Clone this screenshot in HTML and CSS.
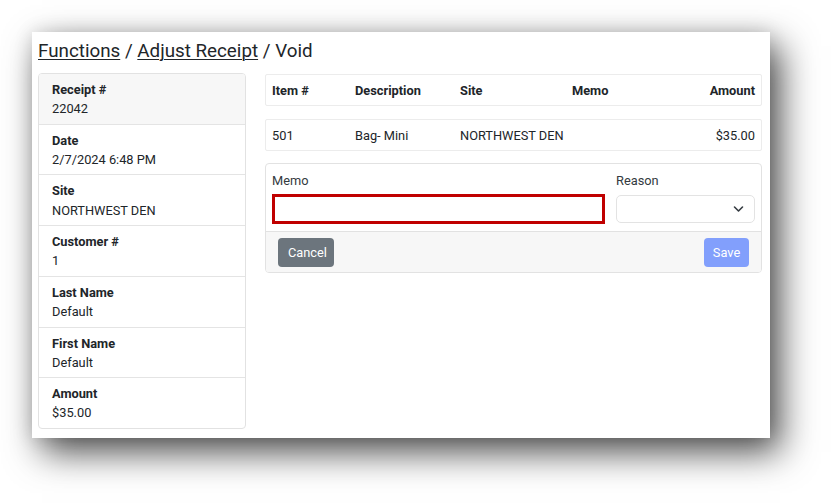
FILE: index.html
```html
<!DOCTYPE html>
<html>
<head>
<meta charset="utf-8">
<link rel="stylesheet" href="styles.css">
</head>
<body>
<div class="sheet">
  <h4 class="crumbs"><a href="#">Functions</a> / <a href="#">Adjust Receipt</a> / Void</h4>
  <div class="content">
    <ul class="info">
      <li class="info-item first"><div class="lbl">Receipt #</div><div class="val">22042</div></li>
      <li class="info-item"><div class="lbl">Date</div><div class="val">2/7/2024 6:48 PM</div></li>
      <li class="info-item"><div class="lbl">Site</div><div class="val">NORTHWEST DEN</div></li>
      <li class="info-item"><div class="lbl">Customer #</div><div class="val">1</div></li>
      <li class="info-item"><div class="lbl">Last Name</div><div class="val">Default</div></li>
      <li class="info-item"><div class="lbl">First Name</div><div class="val">Default</div></li>
      <li class="info-item"><div class="lbl">Amount</div><div class="val">$35.00</div></li>
    </ul>
    <div class="main">
      <div class="trow thead">
        <div>Item #</div><div>Description</div><div>Site</div><div>Memo</div><div class="amt">Amount</div>
      </div>
      <div class="trow tbody">
        <div>501</div><div>Bag- Mini</div><div>NORTHWEST DEN</div><div></div><div class="amt">$35.00</div>
      </div>
      <div class="card">
        <div class="card-body">
          <div class="field">
            <label class="flabel">Memo</label>
            <input class="memo-input" type="text">
          </div>
          <div class="field">
            <label class="flabel">Reason</label>
            <div class="select">
              <svg class="chev" width="11" height="8" viewBox="0 0 11 8"><path d="M1.5 2 5.5 6 9.5 2" fill="none" stroke="#343a40" stroke-width="1.6" stroke-linecap="round" stroke-linejoin="round"/></svg>
            </div>
          </div>
        </div>
        <div class="card-footer">
          <button class="btn btn-cancel">Cancel</button>
          <button class="btn btn-save" disabled>Save</button>
        </div>
      </div>
    </div>
  </div>
</div>
</body>
</html>
```

FILE: styles.css
```css
html, body {
  margin: 0;
  padding: 0;
  background: #fff;
}
body {
  min-height: 503px;
  font-family: Roboto, "Noto Sans", sans-serif;
  font-size: 12.8px;
  line-height: 19.2px;
  color: #212529;
}
.sheet {
  margin: 32px 0 0 32px;
  width: 738px;
  height: 406px;
  box-sizing: border-box;
  padding: 0 8px 0 6px;
  background: #fff;
  box-shadow: 10px 14px 34px rgba(0, 0, 0, 0.7), 0 0 18px rgba(0, 0, 0, 0.12);
}
.crumbs {
  margin: 0;
  padding-top: 7px;
  font-size: 18.8px;
  line-height: 24px;
  font-weight: 400;
  color: #212529;
}
.crumbs a {
  color: #212529;
  text-decoration: underline;
  text-underline-offset: 2px;
  text-decoration-thickness: 1px;
}
.content {
  display: flex;
  gap: 19px;
  margin-top: 10px;
  align-items: flex-start;
}
.info {
  list-style: none;
  margin: 0;
  padding: 0;
  width: 208px;
  box-sizing: border-box;
  flex: none;
  border: 1px solid #e2e2e2;
  border-radius: 4px;
  overflow: hidden;
}
.info-item {
  padding: 6px 13px 5.3px;
  border-top: 1px solid #e4e4e4;
}
.info-item.first {
  border-top: none;
  background: #f7f7f7;
}
.lbl {
  font-weight: 700;
}
.main {
  flex: 1;
  display: flex;
  flex-direction: column;
  margin-top: 1px;
}
.trow {
  display: grid;
  grid-template-columns: 83px 105px 112px 1fr auto;
  align-items: center;
  height: 32px;
  box-sizing: border-box;
  padding: 1px 6px 0;
  border: 1px solid #ececec;
  border-radius: 2px;
  white-space: nowrap;
}
.thead {
  font-weight: 700;
}
.tbody {
  margin-top: 13px;
}
.amt {
  text-align: right;
}
.card {
  margin-top: 12px;
  border: 1px solid #e2e2e2;
  border-radius: 4px;
  overflow: hidden;
}
.card-body {
  display: grid;
  grid-template-columns: 1fr 139px;
  gap: 11px;
  padding: 7px 6px 7px;
}
.field {
  display: flex;
  flex-direction: column;
}
.flabel {
  color: #343a40;
  margin-bottom: 4px;
  line-height: 19.2px;
}
.memo-input {
  box-sizing: border-box;
  height: 30px;
  width: 100%;
  margin: 0;
  border: 3px solid #c00000;
  background: #fff;
  outline: none;
  padding: 0 6px;
}
.select {
  box-sizing: border-box;
  height: 28px;
  margin-top: 1px;
  border: 1px solid #e3e3e3;
  border-radius: 5px;
  background: #fff;
  display: flex;
  align-items: center;
  justify-content: flex-end;
  padding-right: 10px;
}
.chev {
  display: block;
}
.card-footer {
  display: flex;
  justify-content: space-between;
  align-items: flex-start;
  background: #f7f7f7;
  border-top: 1px solid #e2e2e2;
  padding: 6px 12px 6px;
  height: 41px;
  box-sizing: border-box;
}
.btn {
  font-family: inherit;
  font-size: 12.8px;
  line-height: 19px;
  height: 29px;
  border: none;
  border-radius: 4px;
  color: #fff;
  padding: 0 10px;
  margin: 0;
}
.btn-cancel {
  background: #6c757d;
  width: 56px;
}
.btn-save {
  background: #829ffc;
  width: 45px;
  padding: 0;
}
```
